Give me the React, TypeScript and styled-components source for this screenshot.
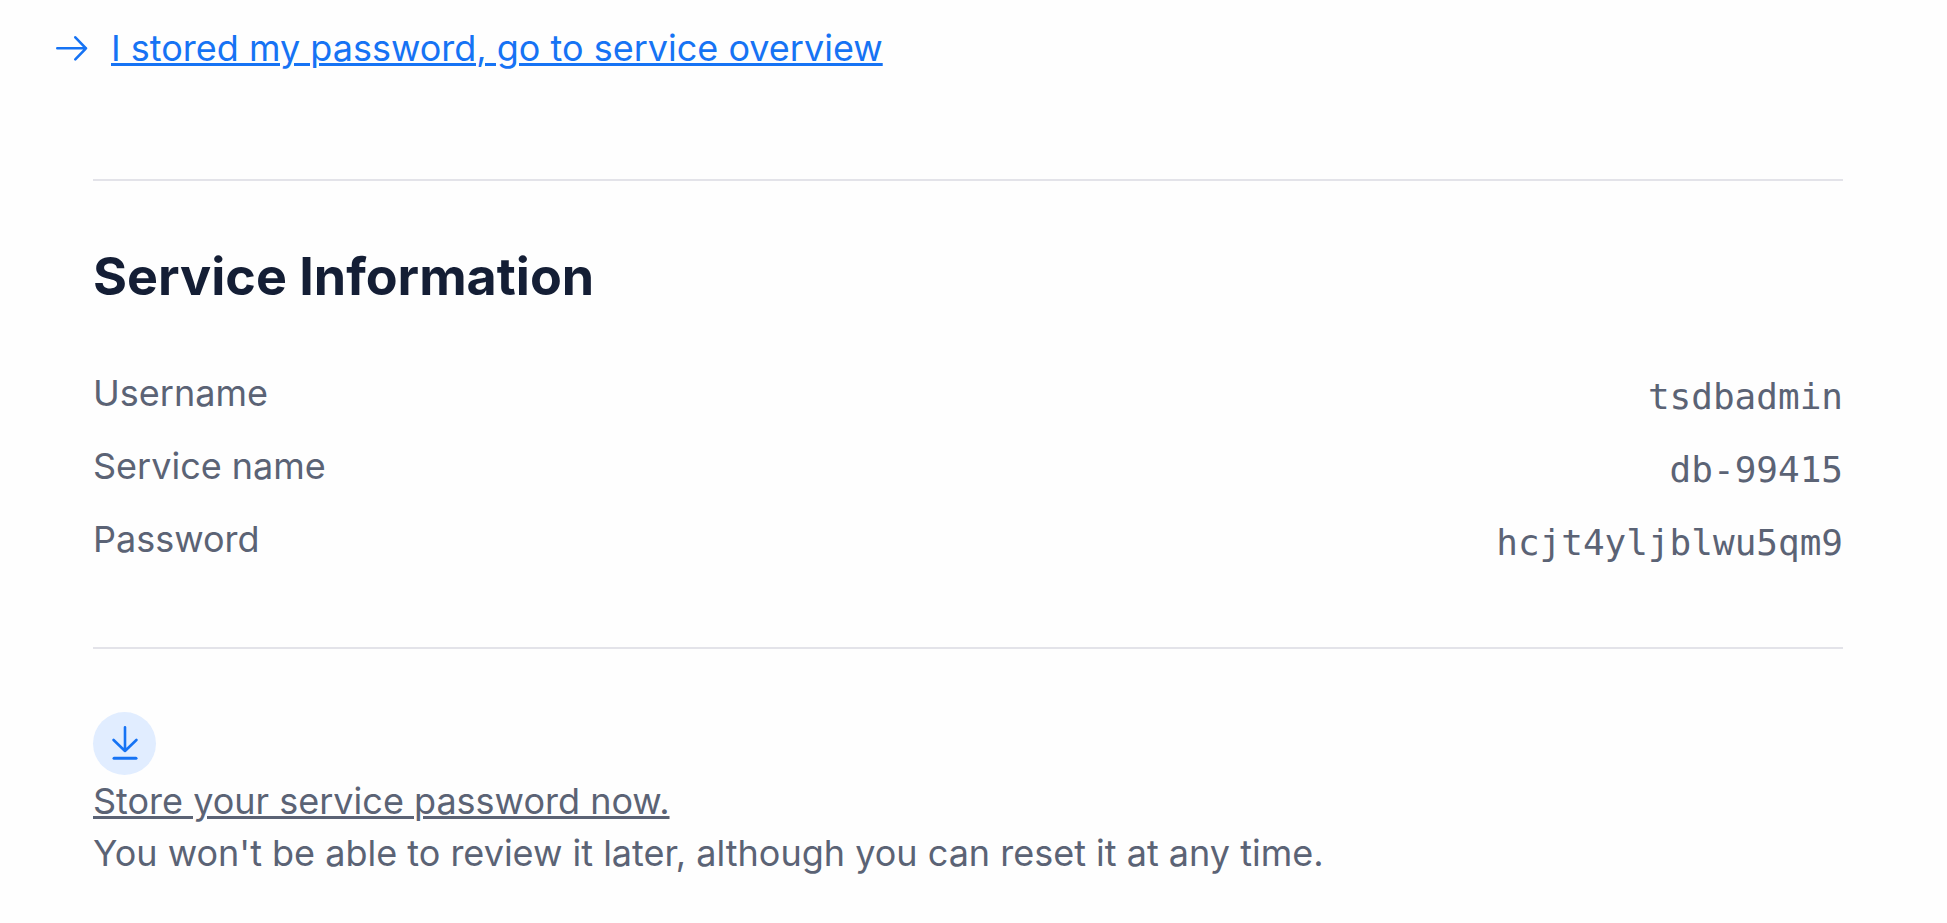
import React from 'react';
import styled, { createGlobalStyle } from 'styled-components';

const Global = createGlobalStyle`
  *, *::before, *::after { box-sizing: border-box; }
  body {
    margin: 0;
    background: #fefefe;
    color: #5b6375;
    font: 400 36px/52px Inter, "Liberation Sans", sans-serif;
  }
`;

const Page = styled.main`
  padding: 22px 104px 24px 93px;
`;

const OverviewLink = styled.a`
  display: flex;
  align-items: center;
  gap: 22px;
  width: fit-content;
  margin-left: -38px;
  color: #1673f4;
  text-decoration: none;
  span {
    text-decoration: underline;
    text-decoration-thickness: 3px;
    text-underline-offset: 2px;
  }
`;

const Section = styled.section`
  margin-top: 105px;
  padding: 62px 0 74px;
  border-top: 2px solid #e3e3e9;
  border-bottom: 2px solid #e3e3e9;
`;

const Title = styled.h2`
  margin: 0 0 56px;
  color: #141e35;
  font-size: 52px;
  font-weight: 700;
  line-height: 68px;
`;

const Details = styled.dl`
  display: grid;
  gap: 13px;
  margin: 0;
`;

const Row = styled.div`
  display: flex;
  justify-content: space-between;
`;

const Label = styled.dt``;

const Value = styled.dd`
  margin: 0;
  font-family: "DejaVu Sans Mono", monospace;
  line-height: 60px;
`;

const Notice = styled.footer`
  padding-top: 63px;
  p { margin: 0; }
`;

const Badge = styled.span`
  display: flex;
  align-items: center;
  justify-content: center;
  width: 63px;
  height: 63px;
  border-radius: 50%;
  background: #e1edff;
  color: #1673f4;
`;

const StoreLink = styled.a`
  color: inherit;
  text-decoration: underline;
  text-decoration-thickness: 3px;
  text-underline-offset: 2px;
`;

const details = [
  ['Username', 'tsdbadmin'],
  ['Service name', 'db-99415'],
  ['Password', 'hcjt4yljblwu5qm9'],
];

export default function App() {
  return (
    <Page>
      <Global />
      <OverviewLink href="#overview">
        <svg width="34" height="30" viewBox="0 0 34 30" fill="none" stroke="currentColor" strokeWidth="2.6" strokeLinecap="round" strokeLinejoin="round" aria-hidden="true">
          <path d="M2.3 15.3H31M20.3 4.3L31 15.3L20.3 26.3" />
        </svg>
        <span>I stored my password, go to service overview</span>
      </OverviewLink>
      <Section>
        <Title>Service Information</Title>
        <Details>
          {details.map(([label, value]) => (
            <Row key={label}>
              <Label>{label}</Label>
              <Value>{value}</Value>
            </Row>
          ))}
        </Details>
      </Section>
      <Notice>
        <Badge>
          <svg width="26" height="36" viewBox="0 0 26 36" fill="none" stroke="currentColor" strokeWidth="2.6" strokeLinecap="round" strokeLinejoin="round" aria-hidden="true">
            <path d="M13 1.3V25M1.6 14L13 25L24.4 14" />
            <path d="M2 32.2H24" strokeWidth="3" />
          </svg>
        </Badge>
        <StoreLink href="#store">Store your service password now.</StoreLink>
        <p>You won't be able to review it later, although you can reset it at any time.</p>
      </Notice>
    </Page>
  );
}
